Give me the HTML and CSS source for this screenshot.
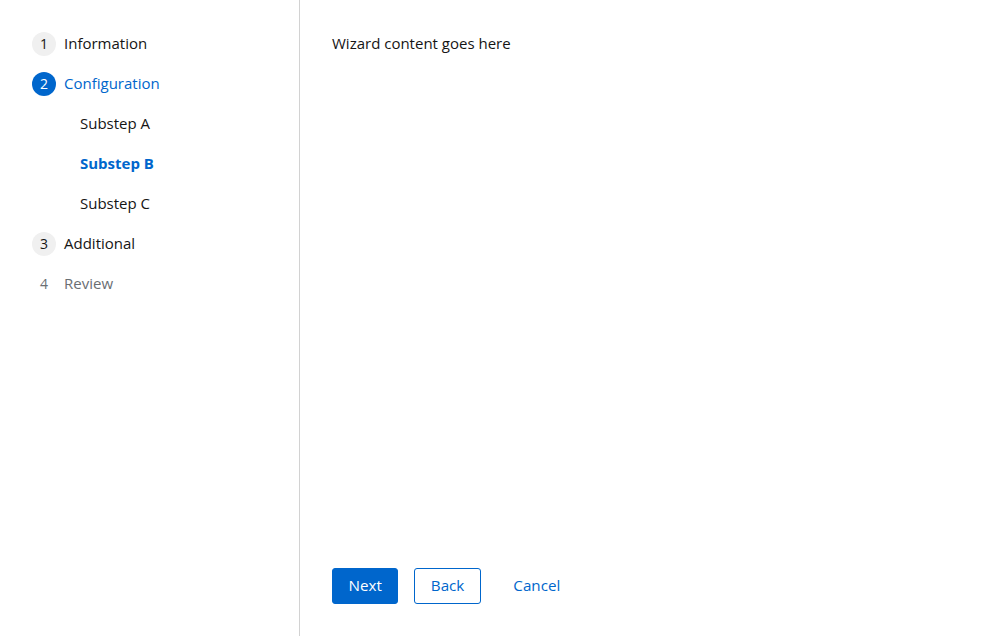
FILE: index.html
```html
<!DOCTYPE html>
<html lang="en">
<head>
<meta charset="utf-8">
<title>Wizard</title>
<link rel="stylesheet" href="styles.css">
</head>
<body>
<div class="wizard">
  <nav class="nav">
    <ol class="nav-list">
      <li class="step"><span class="num">1</span><span class="label">Information</span></li>
      <li class="step current"><span class="num">2</span><span class="label">Configuration</span></li>
      <li class="substep"><span class="label">Substep A</span></li>
      <li class="substep current"><span class="label">Substep B</span></li>
      <li class="substep"><span class="label">Substep C</span></li>
      <li class="step"><span class="num">3</span><span class="label">Additional</span></li>
      <li class="step disabled"><span class="num">4</span><span class="label">Review</span></li>
    </ol>
  </nav>
  <main class="main">
    <div class="body">Wizard content goes here</div>
    <footer class="footer">
      <button class="btn primary">Next</button>
      <button class="btn secondary">Back</button>
      <button class="btn link">Cancel</button>
    </footer>
  </main>
</div>
</body>
</html>
```
FILE: styles.css
```css
* { box-sizing: border-box; }
html, body { margin: 0; height: 100%; }
body {
  font-family: "Open Sans", "Liberation Sans", sans-serif;
  font-size: 15px;
  color: #151515;
  background: #fff;
}
.wizard {
  display: flex;
  height: 100vh;
}
.nav {
  width: 300px;
  flex: none;
  border-right: 1px solid #d2d2d2;
  padding: 32px 24px 24px 32px;
}
.nav-list {
  list-style: none;
  margin: 0;
  padding: 0;
  display: flex;
  flex-direction: column;
  gap: 16px;
}
.step, .substep {
  display: flex;
  align-items: center;
  height: 24px;
  line-height: 22px;
}
.label { padding-bottom: 2px; }
.num {
  width: 24px;
  height: 24px;
  border-radius: 50%;
  background: #f0f0f0;
  color: #151515;
  font-size: 14px;
  line-height: 22px;
  padding-bottom: 1px;
  display: flex;
  align-items: center;
  justify-content: center;
  margin-right: 8px;
  flex: none;
}
.step.current .num { background: #0066cc; color: #fff; }
.step.current .label { color: #0066cc; }
.step.disabled .num { background: transparent; color: #6a6e73; }
.step.disabled .label { color: #6a6e73; }
.substep { padding-left: 48px; }
.substep.current { color: #0066cc; font-weight: 700; }
.main {
  flex: 1;
  display: flex;
  flex-direction: column;
}
.body {
  flex: 1;
  padding: 31px 32px 33px;
  line-height: 24px;
}
.footer {
  display: flex;
  gap: 16px;
  padding: 0 32px 32px;
}
.btn {
  font-family: inherit;
  font-size: 15.2px;
  height: 36px;
  padding: 0 15.5px 2px;
  border-radius: 3px;
  border: 1px solid transparent;
  background: transparent;
  cursor: pointer;
}
.btn.primary { background: #0066cc; color: #fff; border-color: #0066cc; }
.btn.secondary { color: #0066cc; border-color: #0066cc; }
.btn.link { color: #0066cc; }
```
